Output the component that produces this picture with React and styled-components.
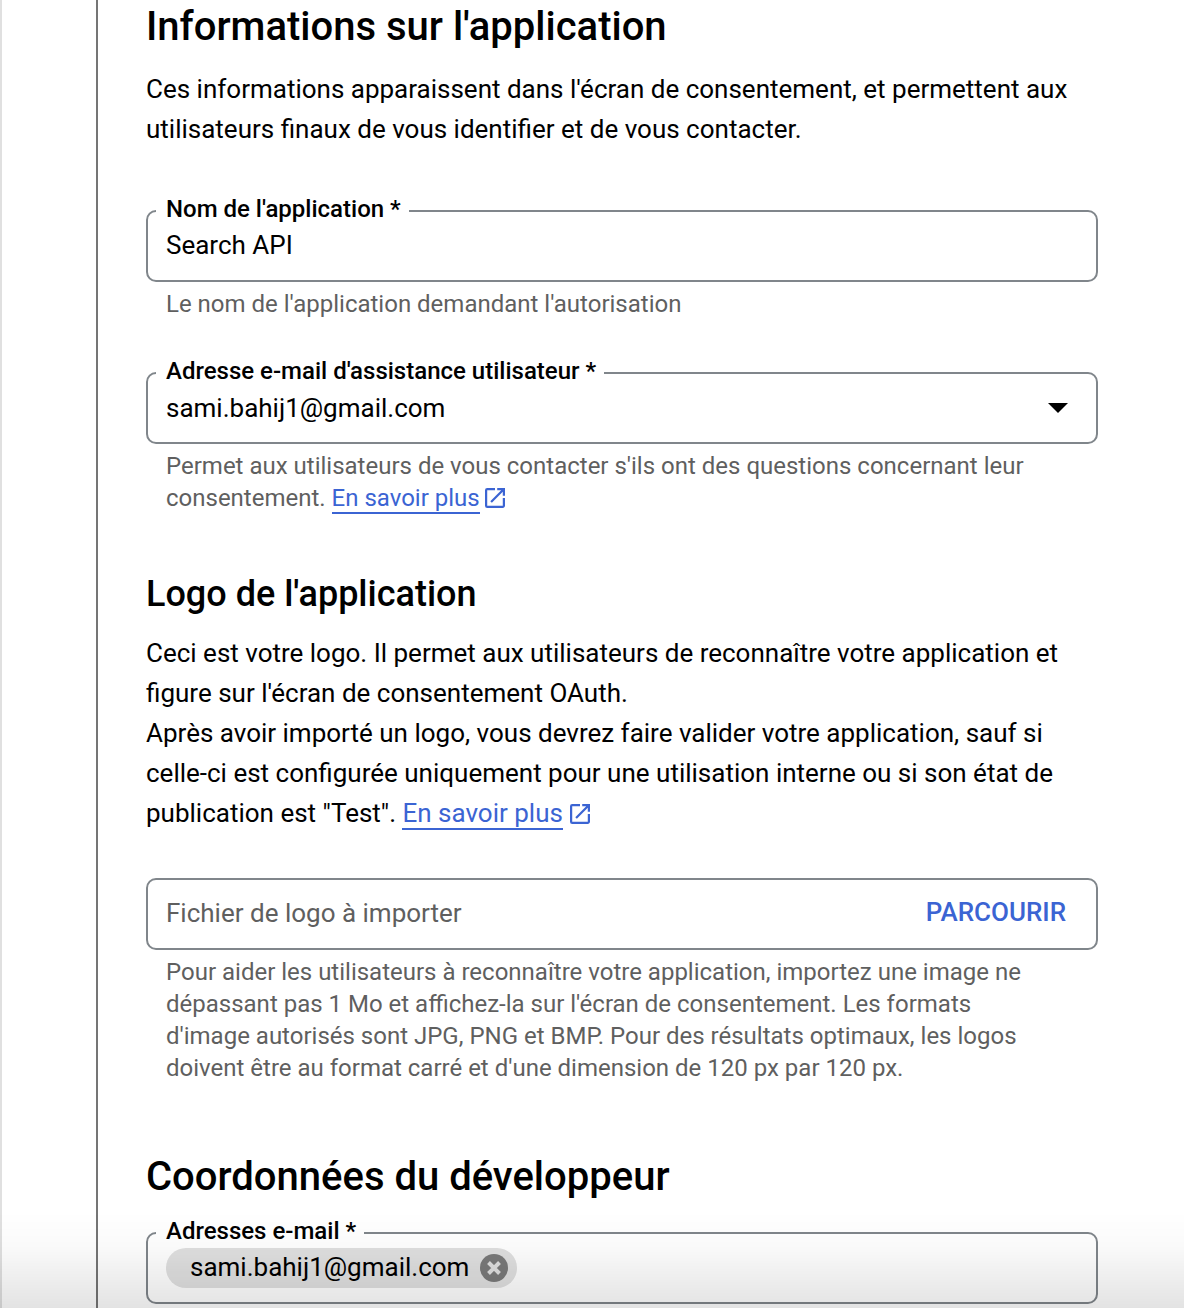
import React, { useState } from "react";
import styled, { createGlobalStyle } from "styled-components";

const GlobalStyle = createGlobalStyle`
  *, *::before, *::after { box-sizing: border-box; }
  body {
    margin: 0;
    background: #fff;
    color: #000;
    font-family: Roboto, "Liberation Sans", sans-serif;
    font-size: 26px;
    line-height: 40px;
  }
`;

const Page = styled.div`
  min-height: 100vh;
  padding-left: 94px;
  border-left: 2px solid #e0e0e0;
`;

const Panel = styled.main`
  min-height: 100vh;
  padding: 2px 86px 4px 48px;
  border-left: 2px solid #757575;
`;

const Section = styled.section`
  margin-top: ${(p) => p.$gap || 0}px;
`;

const Title = styled.h1`
  margin: 0;
  font-size: 40px;
  line-height: 50px;
  font-weight: 500;
`;

const Subtitle = styled.h2`
  margin: 0;
  font-size: 36px;
  line-height: 44px;
  font-weight: 500;
`;

const Text = styled.p`
  margin: ${(p) => (p.$follows ? 0 : 17)}px 0 0;
`;

const Field = styled.div`
  margin-top: ${(p) => p.$gap}px;
`;

const Outline = styled.div`
  position: relative;
  display: flex;
  align-items: center;
  height: 72px;
  padding: 0 18px;
  border: 2px solid #80868b;
  border-radius: 10px;
`;

const Label = styled.label`
  position: absolute;
  top: -19px;
  left: 8px;
  padding: 0 8px 0 10px;
  background: #fff;
  font-size: 24px;
  line-height: 32px;
  font-weight: 500;
`;

const controlStyles = `
  flex: 1;
  min-width: 0;
  height: 40px;
  margin: 0;
  padding: 0 0 2px;
  border: 0;
  outline: 0;
  background: transparent;
  color: #000;
  font: inherit;
`;

const Input = styled.input`
  ${controlStyles}
  &::placeholder { color: #5f5f5f; opacity: 1; }
`;

const Select = styled.select`
  ${controlStyles}
  appearance: none;
`;

const Arrow = styled.svg`
  flex: none;
  width: 20px;
  height: 10px;
  margin-right: 10px;
  pointer-events: none;
`;

const Hint = styled.p`
  margin: 6px 0 0;
  padding: 0 56px 0 20px;
  color: #5f5f5f;
  font-size: 24px;
  line-height: 32px;
`;

const LinkGroup = styled.span`
  color: #3b64d3;
  white-space: nowrap;
`;

const Link = styled.a`
  color: inherit;
  text-decoration: none;
  border-bottom: 2px solid currentColor;
`;

const ExternalIcon = styled.svg`
  width: 22px;
  height: 22px;
  margin-left: ${(p) => p.$gap}px;
  vertical-align: -3px;
`;

const BrowseButton = styled.button`
  margin: 0 12px 0 0;
  padding: 0 0 4px;
  border: 0;
  background: transparent;
  color: #3b64d3;
  font: inherit;
  font-weight: 500;
  cursor: pointer;
`;

const Chip = styled.span`
  display: flex;
  align-items: center;
  gap: 11px;
  height: 40px;
  padding: 0 9px 0 24px;
  border-radius: 20px;
  background: #e0e0e0;
`;

const ChipText = styled.span`
  padding-bottom: 2px;
`;

const RemoveButton = styled.button`
  display: flex;
  padding: 0;
  border: 0;
  border-radius: 50%;
  background: transparent;
  cursor: pointer;
`;

const BottomShade = styled.div`
  position: fixed;
  inset: auto 0 0;
  height: 96px;
  background: linear-gradient(rgba(0, 0, 0, 0), rgba(0, 0, 0, 0.02) 35%, rgba(0, 0, 0, 0.11));
  pointer-events: none;
`;

function LearnMore({ gap }) {
  return (
    <LinkGroup>
      <Link href="#">En savoir plus</Link>
      <ExternalIcon $gap={gap} viewBox="2.1 2.1 19.8 19.8" fill="currentColor" aria-hidden="true">
        <path d="M19 19H5V5h7V3H5a2 2 0 0 0-2 2v14a2 2 0 0 0 2 2h14c1.100 0 2-.9 2-2v-7h-2v7zM14 3v2h3.590l-9.830 9.830 1.410 1.410L19 6.410V10h2V3h-7z" />
      </ExternalIcon>
    </LinkGroup>
  );
}

export default function App() {
  const [name, setName] = useState("Search API");
  const [emails, setEmails] = useState(["sami.bahij1@gmail.com"]);

  return (
    <Page>
      <GlobalStyle />
      <Panel>
        <Section>
          <Title>Informations sur l'application</Title>
          <Text>
            Ces informations apparaissent dans l'écran de consentement, et permettent aux
            utilisateurs finaux de vous identifier et de vous contacter.
          </Text>
          <Field $gap={61}>
            <Outline>
              <Label htmlFor="app-name">Nom de l'application *</Label>
              <Input id="app-name" value={name} onChange={(e) => setName(e.target.value)} />
            </Outline>
            <Hint>Le nom de l'application demandant l'autorisation</Hint>
          </Field>
          <Field $gap={52}>
            <Outline>
              <Label htmlFor="support-email">Adresse e-mail d'assistance utilisateur *</Label>
              <Select id="support-email">
                <option>sami.bahij1@gmail.com</option>
              </Select>
              <Arrow viewBox="0 0 20 10" aria-hidden="true">
                <path d="M0 0H20L10 10Z" />
              </Arrow>
            </Outline>
            <Hint>
              Permet aux utilisateurs de vous contacter s'ils ont des questions concernant leur
              consentement. <LearnMore gap={4} />
            </Hint>
          </Field>
        </Section>

        <Section $gap={58}>
          <Subtitle>Logo de l'application</Subtitle>
          <Text>
            Ceci est votre logo. Il permet aux utilisateurs de reconnaître votre application et
            figure sur l'écran de consentement OAuth.
          </Text>
          <Text $follows>
            Après avoir importé un logo, vous devrez faire valider votre application, sauf si
            celle-ci est configurée uniquement pour une utilisation interne ou si son état de
            publication est "Test". <LearnMore gap={6} />
          </Text>
          <Field $gap={45}>
            <Outline>
              <Input aria-label="Fichier de logo à importer" placeholder="Fichier de logo à importer" readOnly />
              <BrowseButton type="button">PARCOURIR</BrowseButton>
            </Outline>
            <Hint>
              Pour aider les utilisateurs à reconnaître votre application, importez une image ne
              dépassant pas 1 Mo et affichez-la sur l'écran de consentement. Les formats
              d'image autorisés sont JPG, PNG et BMP. Pour des résultats optimaux, les logos
              doivent être au format carré et d'une dimension de 120 px par 120 px.
            </Hint>
          </Field>
        </Section>

        <Section $gap={68}>
          <Title as="h2">Coordonnées du développeur</Title>
          <Field $gap={30}>
            <Outline>
              <Label htmlFor="contact-emails">Adresses e-mail *</Label>
              {emails.map((email) => (
                <Chip key={email}>
                  <ChipText>{email}</ChipText>
                  <RemoveButton
                    type="button"
                    aria-label={`Supprimer ${email}`}
                    onClick={() => setEmails(emails.filter((e) => e !== email))}
                  >
                    <svg width="28" height="28" viewBox="0 0 28 28" aria-hidden="true">
                      <circle cx="14" cy="14" r="14" fill="#7a7a7a" />
                      <path d="M8.500 8.500L19.500 19.500M19.500 8.500L8.500 19.500" stroke="#e0e0e0" strokeWidth="4" />
                    </svg>
                  </RemoveButton>
                </Chip>
              ))}
              <Input id="contact-emails" type="email" />
            </Outline>
          </Field>
        </Section>
      </Panel>
      <BottomShade />
    </Page>
  );
}
